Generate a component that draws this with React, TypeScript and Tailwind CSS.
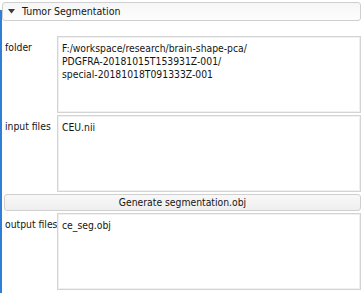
const Field = ({ label, lines }: { label: string; lines: string[] }) => {
  return (
    <div className="flex">
      <div className="w-[55px] shrink-0 whitespace-nowrap pl-[3px] pt-[5px] leading-[13px]">{label}</div>
      <div className="h-[77px] flex-1 border border-[#d4d4d4] bg-white px-[4px] pt-[5px] leading-[13px] shadow-[inset_0_0_0_1px_#f0f0f0]">
        {lines.map((l) => (
          <div key={l}>{l}</div>
        ))}
      </div>
    </div>
  );
};

export default function App() {
  return (
    <div
      className="relative h-[293px] w-[363px] overflow-hidden bg-white text-[10.3px] text-[#141414]"
      style={{ fontFamily: '"DejaVu Sans Condensed", "DejaVu Sans", sans-serif' }}
    >
      <div className="absolute left-0 top-[10px] bottom-0 w-[2px] bg-[#2f7fd6]" />
      <div className="flex flex-col gap-[2px] pl-[2px] pr-[2px] pt-[2px]">
        <div className="flex h-[19px] items-center gap-[7px] rounded-[3px] border border-[#cfcfcf] bg-gradient-to-b from-[#f6f6f6] to-[#fdfdfd] pl-[5px] text-[10.5px]">
          <svg width="7" height="5" viewBox="0 0 7 5">
            <path d="M0 0 L7 0 L3.5 4.5 Z" fill="#3a3a3a" />
          </svg>
          <span>Tumor Segmentation</span>
        </div>
        <div className="mt-[13px] flex flex-col gap-[2px]">
          <Field
            label="folder"
            lines={[
              "F:/workspace/research/brain-shape-pca/",
              "PDGFRA-20181015T153931Z-001/",
              "special-20181018T091333Z-001",
            ]}
          />
          <Field label="input files" lines={["CEU.nii"]} />
          <button className="ml-[2px] h-[17px] rounded-[3px] border border-[#cfcfcf] bg-gradient-to-b from-[#f8f8f8] to-[#efefef] text-center leading-[15px]">
            Generate segmentation.obj
          </button>
          <Field label="output files" lines={["ce_seg.obj"]} />
        </div>
      </div>
    </div>
  );
}
